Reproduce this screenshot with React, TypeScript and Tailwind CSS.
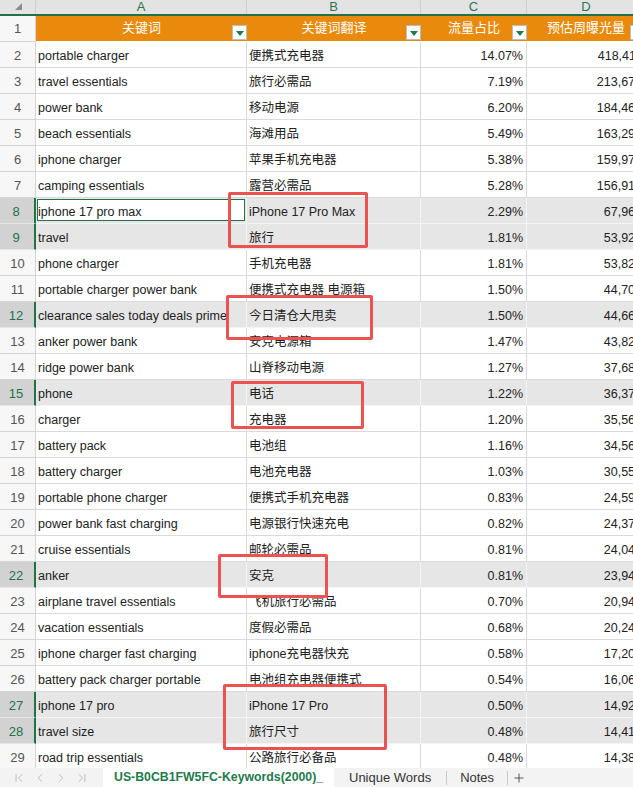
import { ChevronFirst, ChevronLast, ChevronLeft, ChevronRight, Plus } from "lucide-react";

type Row = { n: number; a: string; b: string; c: string; d: string; sel?: boolean };

const rows: Row[] = [
  { n: 2, a: "portable charger", b: "便携式充电器", c: "14.07%", d: "418,411" },
  { n: 3, a: "travel essentials", b: "旅行必需品", c: "7.19%", d: "213,670" },
  { n: 4, a: "power bank", b: "移动电源", c: "6.20%", d: "184,463" },
  { n: 5, a: "beach essentials", b: "海滩用品", c: "5.49%", d: "163,293" },
  { n: 6, a: "iphone charger", b: "苹果手机充电器", c: "5.38%", d: "159,974" },
  { n: 7, a: "camping essentials", b: "露营必需品", c: "5.28%", d: "156,916" },
  { n: 8, a: "iphone 17 pro max", b: "iPhone 17 Pro Max", c: "2.29%", d: "67,962", sel: true },
  { n: 9, a: "travel", b: "旅行", c: "1.81%", d: "53,921", sel: true },
  { n: 10, a: "phone charger", b: "手机充电器", c: "1.81%", d: "53,820" },
  { n: 11, a: "portable charger power bank", b: "便携式充电器 电源箱", c: "1.50%", d: "44,704" },
  { n: 12, a: "clearance sales today deals prime", b: "今日清仓大甩卖", c: "1.50%", d: "44,663", sel: true },
  { n: 13, a: "anker power bank", b: "安克电源箱", c: "1.47%", d: "43,824" },
  { n: 14, a: "ridge power bank", b: "山脊移动电源", c: "1.27%", d: "37,680" },
  { n: 15, a: "phone", b: "电话", c: "1.22%", d: "36,372", sel: true },
  { n: 16, a: "charger", b: "充电器", c: "1.20%", d: "35,560" },
  { n: 17, a: "battery pack", b: "电池组", c: "1.16%", d: "34,565" },
  { n: 18, a: "battery charger", b: "电池充电器", c: "1.03%", d: "30,553" },
  { n: 19, a: "portable phone charger", b: "便携式手机充电器", c: "0.83%", d: "24,594" },
  { n: 20, a: "power bank fast charging", b: "电源银行快速充电", c: "0.82%", d: "24,373" },
  { n: 21, a: "cruise essentials", b: "邮轮必需品", c: "0.81%", d: "24,041" },
  { n: 22, a: "anker", b: "安克", c: "0.81%", d: "23,946", sel: true },
  { n: 23, a: "airplane travel essentials", b: "飞机旅行必需品", c: "0.70%", d: "20,944" },
  { n: 24, a: "vacation essentials", b: "度假必需品", c: "0.68%", d: "20,245" },
  { n: 25, a: "iphone charger fast charging", b: "iphone充电器快充", c: "0.58%", d: "17,206" },
  { n: 26, a: "battery pack charger portable", b: "电池组充电器便携式", c: "0.54%", d: "16,062" },
  { n: 27, a: "iphone 17 pro", b: "iPhone 17 Pro", c: "0.50%", d: "14,927", sel: true },
  { n: 28, a: "travel size", b: "旅行尺寸", c: "0.48%", d: "14,413", sel: true },
  { n: 29, a: "road trip essentials", b: "公路旅行必备品", c: "0.48%", d: "14,386" },
];

// red annotation boxes drawn over the sheet
const marks = [
  { id: 1, cls: "left-[228px] top-[192px] w-[140px] h-[56px]" },
  { id: 2, cls: "left-[226px] top-[295px] w-[147px] h-[45px]" },
  { id: 3, cls: "left-[231px] top-[381px] w-[133px] h-[48px]" },
  { id: 4, cls: "left-[218px] top-[554px] w-[110px] h-[44px]" },
  { id: 5, cls: "left-[223px] top-[684px] w-[164px] h-[66px]" },
];

function FilterBtn() {
  return (
    <div className="absolute right-0 bottom-[1px] w-[15px] h-[15px] bg-white border border-[#bdbdbd] flex items-end justify-center pb-[3px]">
      <div className="w-0 h-0 border-l-[4px] border-r-[4px] border-t-[5px] border-l-transparent border-r-transparent border-t-[#1f7a4d]" />
    </div>
  );
}

export default function App() {
  const font = "font-['Liberation_Sans','Noto_Sans_CJK_SC',sans-serif]";
  return (
    <div className={`relative w-[633px] h-[787px] overflow-hidden flex flex-col bg-white text-[#222] ${font}`}>
      <div className="flex-1 overflow-hidden">
        {/* column letters */}
        <div className="flex h-[16px] bg-[#e3e3e3] border-b-2 border-[#217346] text-[13px] leading-[14px] text-[#2f7553]">
          <div className="w-[36px] shrink-0 relative border-r border-[#cfcfcf]">
            <div className="absolute left-[15px] top-[3px] w-0 h-0 border-b-[7px] border-l-[7px] border-l-transparent border-b-[#8c8c8c]" />
          </div>
          <div className="w-[211px] shrink-0 text-center border-r border-[#cfcfcf]">A</div>
          <div className="w-[174px] shrink-0 text-center border-r border-[#cfcfcf]">B</div>
          <div className="w-[106px] shrink-0 text-center border-r border-[#cfcfcf]">C</div>
          <div className="w-[118px] shrink-0 text-center">D</div>
        </div>

        {/* header row */}
        <div className="flex h-[26px] text-[13px]">
          <div className="w-[36px] shrink-0 flex items-center justify-center bg-[#f7f7f7] text-[#555] border-r border-b border-[#d4d4d4]">1</div>
          <div className="relative w-[211px] shrink-0 flex items-center justify-center pb-[1px] bg-[#e98a0c] text-white border-b border-white">
            关键词
            <FilterBtn />
          </div>
          <div className="relative w-[174px] shrink-0 flex items-center justify-center pb-[1px] bg-[#e98a0c] text-white border-b border-white">
            关键词翻译
            <FilterBtn />
          </div>
          <div className="relative w-[106px] shrink-0 flex items-center justify-center pb-[1px] bg-[#e98a0c] text-white border-b border-white">
            流量占比
            <FilterBtn />
          </div>
          <div className="relative w-[118px] shrink-0 flex items-center justify-center pb-[1px] bg-[#e98a0c] text-white border-b border-white">
            预估周曝光量
            <FilterBtn />
          </div>
        </div>

        {rows.map((r) => {
          const bg = r.sel ? "bg-[#e6e6e6]" : "bg-white";
          const line = r.sel ? "border-[#f4f4f4]" : "border-[#dadada]";
          return (
            <div key={r.n} className="flex h-[26px] text-[12.5px]">
              <div
                className={
                  r.sel
                    ? "w-[36px] shrink-0 flex items-center justify-center pt-[3px] pr-[2px] bg-[#d2d2d2] text-[#217346] text-[13px] border-r-2 border-r-[#217346] border-b border-b-[#e6e6e6]"
                    : "w-[36px] shrink-0 flex items-center justify-center pt-[3px] bg-[#f7f7f7] text-[#555] text-[13px] border-r border-b border-[#d4d4d4]"
                }
              >
                {r.n}
              </div>
              <div className={`relative w-[211px] shrink-0 flex items-center pl-[2px] pt-[3px] whitespace-nowrap overflow-hidden border-r border-b ${line} ${bg}`}>
                {r.n === 8 && <div className="absolute left-[1px] top-[1px] right-[1px] bottom-[2px] bg-white border border-[#217346]" />}
                <span className="relative">{r.a}</span>
              </div>
              <div className={`w-[174px] shrink-0 flex items-center pl-[2px] pt-[3px] whitespace-nowrap overflow-hidden border-r border-b ${line} ${bg}`}>
                {r.b}
              </div>
              <div className={`w-[106px] shrink-0 flex items-center justify-end pr-[3px] pt-[3px] border-r border-b ${line} ${bg}`}>
                {r.c}
              </div>
              <div className={`w-[118px] shrink-0 flex items-center justify-end pr-[3px] pt-[3px] border-b ${line} ${bg}`}>
                {r.d}
              </div>
            </div>
          );
        })}
      </div>

      {/* sheet tabs */}
      <div className="h-[19px] shrink-0 flex items-center bg-[#f3f3f3] text-[13px]">
        <div className="flex items-center gap-[7px] pl-[12px] w-[103px] text-[#a8a8a8]">
          <ChevronFirst className="w-[14px] h-[14px]" strokeWidth={1.25} />
          <ChevronLeft className="w-[14px] h-[14px]" strokeWidth={1.25} />
          <ChevronRight className="w-[14px] h-[14px]" strokeWidth={1.25} />
          <ChevronLast className="w-[14px] h-[14px]" strokeWidth={1.25} />
        </div>
        <div className="h-full w-[231px] flex items-center bg-white pl-[11px] whitespace-nowrap text-[12.3px] font-bold text-[#1f7a4d]">US-B0CB1FW5FC-Keywords(2000)_</div>
        <div className="px-[15px] text-[#333]">Unique Words</div>
        <div className="w-px h-[14px] bg-[#c8c8c8]" />
        <div className="px-[13px] text-[#333]">Notes</div>
        <div className="w-px h-[14px] bg-[#c8c8c8]" />
        <Plus className="ml-[4px] w-[14px] h-[14px] text-[#444]" strokeWidth={1.5} />
      </div>

      {marks.map((m) => (
        <div key={m.id} className={`absolute ${m.cls} border-[3px] border-[#eb5353] rounded-[2px]`} />
      ))}
    </div>
  );
}
